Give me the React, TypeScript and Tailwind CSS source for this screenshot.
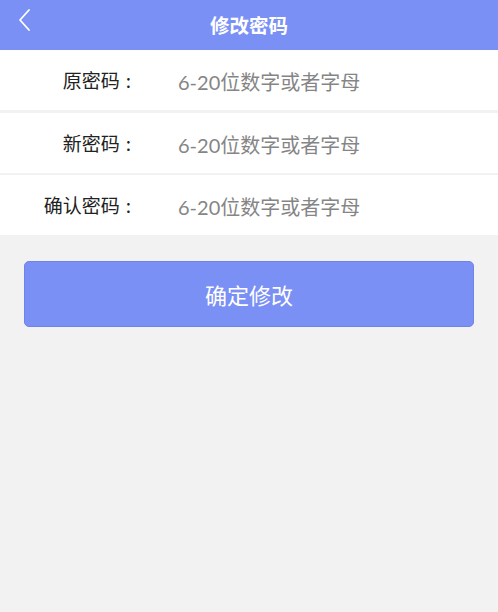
import { useState } from "react";

const fields = [
  { label: "原密码", gap: "" },
  { label: "新密码", gap: "mt-[3px]" },
  { label: "确认密码", gap: "mt-[2px]" },
];

const App = () => {
  const [values, setValues] = useState(["", "", ""]);

  return (
    <div
      className="min-h-[612px] w-full bg-[#f2f2f2]"
      style={{ fontFamily: '"Noto Sans CJK SC", "Noto Sans", sans-serif' }}
    >
      {/* header */}
      <div className="relative flex h-[50px] items-center justify-center bg-[#7b90f5]">
        <button className="absolute left-[14px] top-[7px] flex h-[26px] w-[20px] items-center justify-center">
          <svg width="14" height="24" viewBox="0 0 14 24" fill="none">
            <path
              d="M12 2 L3 12 L12 22"
              stroke="white"
              strokeWidth="1.8"
              strokeLinecap="round"
              strokeLinejoin="round"
            />
          </svg>
        </button>
        <h1 className="text-[19.5px] font-bold leading-none text-white">修改密码</h1>
      </div>

      {/* form rows */}
      {fields.map((f, i) => (
        <div key={i} className={`flex h-[60px] items-center bg-white ${f.gap}`}>
          <label className="w-[136px] shrink-0 pr-[5px] text-right text-[19px] text-[#222]">
            {f.label}
            <span className="ml-[6px]">:</span>
          </label>
          <input
            type="password"
            value={values[i]}
            onChange={(e) => {
              const next = [...values];
              next[i] = e.target.value;
              setValues(next);
            }}
            placeholder="6-20位数字或者字母"
            className="ml-[42px] mt-[3px] flex-1 bg-transparent font-['Lato','Noto_Sans_CJK_SC',sans-serif] text-[20px] text-[#333] outline-none placeholder:text-[#858585]"
          />
        </div>
      ))}

      {/* submit */}
      <div className="px-[24px] pt-[26px]">
        <button className="flex h-[66px] w-[450px] items-center justify-center rounded-[5px] border border-[#6f84e6] bg-[#7b90f5] text-[22px] text-white">
          确定修改
        </button>
      </div>
    </div>
  );
};

export default App;
